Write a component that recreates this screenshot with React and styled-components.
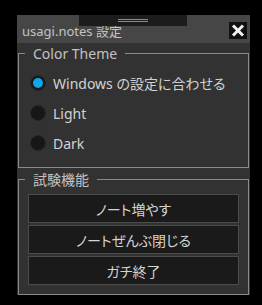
import styled, { createGlobalStyle } from 'styled-components';

const GlobalStyle = createGlobalStyle`
	html, body {
		margin: 0;
		padding: 0;
		background: #000;
	}
	body {
		font-family: 'Noto Sans', 'Noto Sans CJK JP', sans-serif;
		font-feature-settings: 'palt';
	}
`;

const App = () => {
	const themes = ['Windows の設定に合わせる', 'Light', 'Dark'];
	const actions = ['ノート増やす', 'ノートぜんぶ閉じる', 'ガチ終了'];

	return (
		<>
			<GlobalStyle />
			<Window>
				<DragHandle />
				<TitleBar>
					<Title>usagi.notes 設定</Title>
					<CloseButton aria-label='Close'>
						<svg width='14' height='13' viewBox='0 0 14 13'>
							<path d='M2 1.5 L12 11.5 M12 1.5 L2 11.5' stroke='#f2f2f2' strokeWidth='3' strokeLinecap='butt' />
						</svg>
					</CloseButton>
				</TitleBar>
				<Body>
					<Group>
						<Legend>Color Theme</Legend>
						{themes.map((t, i) => (
							<RadioRow key={t}>
								<RadioDot $checked={i === 0} />
								<span>{t}</span>
							</RadioRow>
						))}
						<Spacer $h={9} />
					</Group>
					<Group $top={1}>
						<Legend>試験機能</Legend>
						<ButtonList>
							{actions.map((a) => (
								<ActionButton key={a}>{a}</ActionButton>
							))}
						</ButtonList>
					</Group>
				</Body>
			</Window>
		</>
	);
};

export default App;

const Window = styled.div`
	position: relative;
	margin: 15px 0 0 17px;
	width: 233px;
	height: 280px;
	background: #323232;
	display: flex;
	flex-direction: column;
`;

const DragHandle = styled.div`
	position: absolute;
	top: 0;
	left: 62px;
	width: 108px;
	height: 11px;
	background: #1c1c1c;
	z-index: 2;
	&::after {
		content: '';
		position: absolute;
		left: 39px;
		top: 4px;
		width: 30px;
		height: 1px;
		background: #8a8a8a;
		box-shadow: 0 2px 0 #8a8a8a;
	}
`;

const TitleBar = styled.div`
	height: 28px;
	background: #464646;
	display: flex;
	align-items: center;
	justify-content: space-between;
	padding: 0 3px 0 5px;
`;

const Title = styled.div`
	color: #c4c4c4;
	font-size: 13px;
	padding-top: 2px;
`;

const CloseButton = styled.button`
	width: 18px;
	height: 17px;
	padding: 0;
	border: none;
	background: #111;
	display: flex;
	align-items: center;
	justify-content: center;
	margin-top: 2px;
`;

const Body = styled.div`
	flex: 1;
	display: flex;
	flex-direction: column;
	padding: 0 1px;
`;

const Group = styled.fieldset`
	margin: ${(p) => p.$top || 0}px 0 0;
	padding: 0;
	border: 1px solid #8a8a8a;
	display: flex;
	flex-direction: column;
	&:last-child {
		flex: 1;
	}
`;

const Legend = styled.legend`
	margin-left: 6px;
	padding: 0 8px;
	color: #c2c2c2;
	font-size: 14px;
	line-height: 21px;
`;

const RadioRow = styled.div`
	height: 30px;
	display: flex;
	align-items: center;
	gap: 7px;
	padding-left: 11px;
	color: #d2d2d2;
	font-size: 14px;
	&:first-of-type {
		margin-top: 4px;
	}
`;

const RadioDot = styled.span`
	width: 14px;
	height: 14px;
	border-radius: 50%;
	background: #171717;
	border: 1px solid #262626;
	display: flex;
	align-items: center;
	justify-content: center;
	&::after {
		content: '';
		display: ${(p) => (p.$checked ? 'block' : 'none')};
		width: 10px;
		height: 10px;
		border-radius: 50%;
		background: #12a4e8;
	}
`;

const Spacer = styled.div`
	height: ${(p) => p.$h}px;
`;

const ButtonList = styled.div`
	display: flex;
	flex-direction: column;
	gap: 2px;
	padding: 4px 9px 0;
`;

const ActionButton = styled.button`
	height: 29px;
	background: #1a1a1a;
	border: 1px solid #4c4c4c;
	color: #d4d4d4;
	font-family: 'Noto Sans', 'Noto Sans CJK JP', sans-serif;
	font-feature-settings: 'palt';
	font-size: 14px;
	padding: 0;
	cursor: pointer;
`;
